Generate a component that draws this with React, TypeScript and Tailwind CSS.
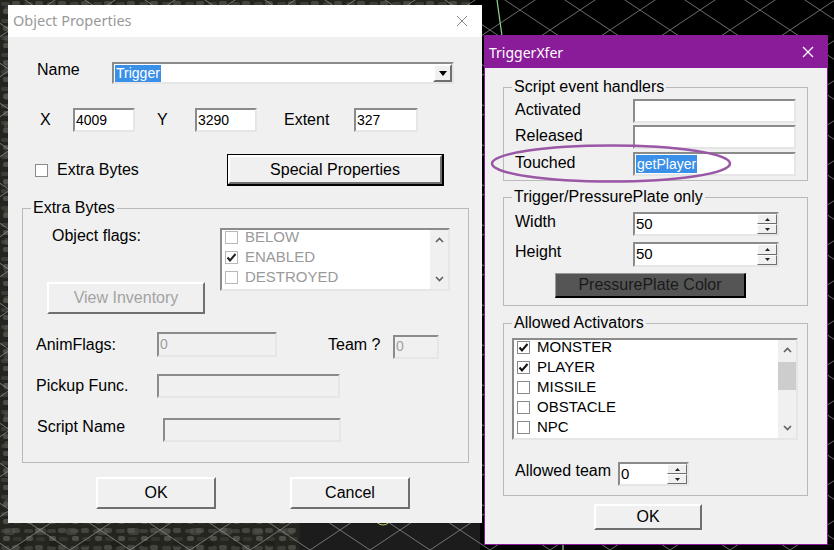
import React from "react";

const sunken = "border-2 border-t-[#8b8b8b] border-l-[#8b8b8b] border-r-[#e6e6e6] border-b-[#e6e6e6]";
const raised = "border-2 border-t-white border-l-white border-r-[#6f6f6f] border-b-[#6f6f6f]";

function Tick({ color = "#111" }: { color?: string }) {
  return (
    <svg width="11" height="11" viewBox="0 0 11 11">
      <path d="M1.5 5.5 L4 8.5 L9.5 2" fill="none" stroke={color} strokeWidth="2" />
    </svg>
  );
}

function Check({ checked, disabled }: { checked?: boolean; disabled?: boolean }) {
  return (
    <div
      className={`w-[13px] h-[13px] shrink-0 flex items-center justify-center bg-white border ${
        disabled ? "border-[#b8b8b8]" : "border-[#8a8a8a]"
      }`}
    >
      {checked && <Tick color={disabled ? "#222" : "#111"} />}
    </div>
  );
}

function Chevron({ up }: { up?: boolean }) {
  return (
    <svg width="9" height="6" viewBox="0 0 9 6">
      <polyline
        points={up ? "1,5 4.5,1.5 8,5" : "1,1 4.5,4.5 8,1"}
        fill="none"
        stroke="#606060"
        strokeWidth="1.6"
      />
    </svg>
  );
}

function Edit({
  w,
  h = "h-[24px]",
  value,
  selected,
  disabled,
}: {
  w: string;
  h?: string;
  value?: string;
  selected?: boolean;
  disabled?: boolean;
}) {
  return (
    <div
      className={`${w} ${h} ${sunken} flex items-center pl-[1px] text-[14px] ${
        disabled ? "bg-[#f0f0f0] text-[#a0a0a0]" : "bg-white text-black"
      }`}
    >
      {value &&
        (selected ? <span className="bg-[#3a8fe8] text-white leading-[18px] px-[1px]">{value}</span> : <span>{value}</span>)}
    </div>
  );
}

function Spin({ w, h = "h-[24px]", value }: { w: string; h?: string; value: string }) {
  return (
    <div className={`${w} ${h} ${sunken} bg-white flex text-[15px] text-black`}>
      <div className="flex-1 flex items-center pl-[1px]">{value}</div>
      <div className="w-[20px] flex flex-col">
        <div className={`flex-1 ${raised} bg-[#f0f0f0] border-[1px] flex items-center justify-center`}>
          <svg width="5" height="3" viewBox="0 0 5 3">
            <path d="M0 3 L2.5 0 L5 3 Z" fill="#222" />
          </svg>
        </div>
        <div className={`flex-1 ${raised} bg-[#f0f0f0] border-[1px] flex items-center justify-center`}>
          <svg width="5" height="3" viewBox="0 0 5 3">
            <path d="M0 0 L2.5 3 L5 0 Z" fill="#222" />
          </svg>
        </div>
      </div>
    </div>
  );
}

function Button({
  w,
  h,
  label,
  disabled,
  className = "",
}: {
  w: string;
  h: string;
  label: string;
  disabled?: boolean;
  className?: string;
}) {
  return (
    <div
      className={`${w} ${h} ${raised} bg-[#f0f0f0] flex items-center justify-center text-[16px] ${
        disabled ? "text-[#a3a3a3]" : "text-black"
      } ${className}`}
    >
      {label}
    </div>
  );
}

function Group({ title, className, children }: { title: string; className: string; children: React.ReactNode }) {
  return (
    <fieldset className={`border border-[#b9b9b9] ${className}`}>
      <legend className="ml-[8px] px-[2px] leading-[18px] text-[16px] text-black">{title}</legend>
      {children}
    </fieldset>
  );
}

function ListBox({
  w,
  h,
  items,
  disabled,
  thumb,
}: {
  w: string;
  h: string;
  items: { label: string; checked?: boolean }[];
  disabled?: boolean;
  thumb?: boolean;
}) {
  return (
    <div className={`${w} ${h} ${sunken} bg-white flex overflow-hidden`}>
      <div className="flex-1 -mt-[3px] pl-[3px] text-[15px]">
        {items.map((it) => (
          <div key={it.label} className="h-[20px] flex items-center gap-[7px]">
            <Check checked={it.checked} disabled={disabled} />
            <span className={disabled ? "text-[#9a9a9a]" : "text-black"}>{it.label}</span>
          </div>
        ))}
      </div>
      <div className="w-[18px] bg-[#f0f0f0] flex flex-col">
        <div className="h-[20px] flex items-center justify-center">
          <Chevron up />
        </div>
        {thumb ? <div className="mt-[2px] h-[28px] bg-[#cdcdcd]" /> : null}
        <div className="flex-1" />
        <div className="h-[20px] flex items-center justify-center">
          <Chevron />
        </div>
      </div>
    </div>
  );
}

function Backdrop() {
  return (
    <svg className="absolute inset-0" width="834" height="550" viewBox="0 0 834 550">
      <defs>
        <pattern id="grid" width="60" height="40" patternUnits="userSpaceOnUse" patternTransform="translate(40 10)">
          <path d="M0 0 L60 40 M60 0 L0 40" stroke="#8a8a8a" strokeWidth="1" fill="none" />
        </pattern>
        <pattern id="stone" width="23" height="17" patternUnits="userSpaceOnUse">
          <rect width="23" height="17" fill="#24251f" />
          <rect x="1" y="2" width="9" height="4" rx="2" fill="#3c3d36" />
          <rect x="12" y="1" width="8" height="5" rx="2" fill="#45463f" />
          <rect x="3" y="9" width="7" height="5" rx="2" fill="#4d4d46" />
          <rect x="13" y="10" width="9" height="4" rx="2" fill="#34352f" />
        </pattern>
        <pattern id="stone2" width="31" height="29" patternUnits="userSpaceOnUse">
          <rect x="4" y="6" width="11" height="7" rx="3" fill="#595951" opacity="0.5" />
          <rect x="18" y="19" width="9" height="6" rx="3" fill="#1a1a16" opacity="0.6" />
        </pattern>
      </defs>
      <rect width="834" height="550" fill="#000" />
      <rect x="0" y="0" width="470" height="550" fill="url(#stone)" />
      <rect x="0" y="0" width="470" height="550" fill="url(#stone2)" />
      <rect x="300" y="523" width="180" height="27" fill="#1c1c1c" />
      <rect width="834" height="550" fill="url(#grid)" opacity="0.8" />
      <path d="M497 0 L502 36" stroke="#8fd88f" strokeWidth="1.2" />
      <path d="M563 545 L563 550" stroke="#8fd88f" strokeWidth="1.2" />
      <circle cx="383" cy="517" r="8" fill="none" stroke="#c8c860" strokeWidth="1" />
    </svg>
  );
}

function ObjectProperties() {
  return (
    <div className="absolute left-[8px] top-[5px] w-[474px] h-[518px] flex flex-col">
      <div className="h-[32px] bg-white flex items-center justify-between pl-[5px] pr-[14px]">
        <span className="font-['Noto_Sans',sans-serif] text-[14.5px] text-[#999999]">Object Properties</span>
        <svg width="12" height="12" viewBox="0 0 12 12">
          <path d="M1 1 L11 11 M11 1 L1 11" stroke="#8c8c8c" strokeWidth="1" />
        </svg>
      </div>
      <div className="flex-1 bg-[#f0f0f0] text-[16px] text-black">
        <div className="mt-[25px] h-[22px] flex items-center pl-[29px]">
          <span className="w-[75px] -mt-[6px]">Name</span>
          <div className={`w-[342px] h-[22px] ${sunken} bg-white flex items-center pl-[1px] text-[14px]`}>
            <span className="bg-[#3a8fe8] text-white leading-[17px] px-[1px]">Trigger</span>
            <div className="flex-1" />
            <div className={`w-[19px] h-[18px] ${raised} bg-[#f0f0f0] flex items-center justify-center`}>
              <svg width="8" height="5" viewBox="0 0 8 5">
                <path d="M0 0 L8 0 L4 5 Z" fill="#000" />
              </svg>
            </div>
          </div>
        </div>

        <div className="mt-[24px] h-[24px] flex items-center pl-[32px]">
          <span className="w-[33px]">X</span>
          <Edit w="w-[62px]" value="4009" />
          <span className="ml-[22px] w-[38px]">Y</span>
          <Edit w="w-[62px]" value="3290" />
          <span className="ml-[27px] w-[70px]">Extent</span>
          <Edit w="w-[64px]" value="327" />
        </div>

        <div className="mt-[22px] h-[32px] flex items-center pl-[27px]">
          <Check />
          <span className="ml-[9px] w-[170px]">Extra Bytes</span>
          <div className="w-[217px] h-[32px] border border-black border-r-2 border-b-2">
            <Button w="w-full" h="h-full" label="Special Properties" />
          </div>
        </div>

        <Group title="Extra Bytes" className="mt-[13px] ml-[14px] w-[447px] h-[264px]">
          <div className="flex">
            <div className="w-[197px] flex flex-col">
              <span className="mt-[10px] pl-[29px] leading-[18px]">Object flags:</span>
              <Button w="w-[158px]" h="h-[32px]" label="View Inventory" disabled className="mt-[37px] ml-[24px]" />
            </div>
            <div className="mt-[11px]">
              <ListBox
                w="w-[230px]"
                h="h-[63px]"
                disabled
                items={[{ label: "BELOW" }, { label: "ENABLED", checked: true }, { label: "DESTROYED" }]}
              />
            </div>
          </div>
          <div className="mt-[18px] h-[25px] flex items-center pl-[13px]">
            <span className="w-[121px]">AnimFlags:</span>
            <Edit w="w-[120px]" h="h-[25px]" value="0" disabled />
            <span className="ml-[51px] w-[65px]">Team ?</span>
            <div className="mt-[4px]">
              <Edit w="w-[46px]" h="h-[24px]" value="0" disabled />
            </div>
          </div>
          <div className="mt-[17px] h-[24px] flex items-center pl-[13px]">
            <span className="w-[121px]">Pickup Func.</span>
            <Edit w="w-[183px]" disabled />
          </div>
          <div className="mt-[20px] h-[24px] flex items-center pl-[14px]">
            <span className="w-[126px] -mt-[7px]">Script Name</span>
            <Edit w="w-[178px]" disabled />
          </div>
        </Group>

        <div className="mt-[14px] flex pl-[88px]">
          <Button w="w-[120px]" h="h-[32px]" label="OK" />
          <Button w="w-[120px]" h="h-[32px]" label="Cancel" className="ml-[74px]" />
        </div>
      </div>
    </div>
  );
}

function TriggerXfer() {
  return (
    <div className="absolute left-[484px] top-[35px] w-[344px] h-[510px] border border-[#8a1c99] flex flex-col">
      <div className="h-[32px] bg-[#8a1c99] flex items-center justify-between pl-[4px] pr-[13px]">
        <span className="font-['Noto_Sans',sans-serif] text-[14px] text-white">TriggerXfer</span>
        <svg width="12" height="12" viewBox="0 0 12 12">
          <path d="M1 1 L11 11 M11 1 L1 11" stroke="#fff" strokeWidth="1.3" />
        </svg>
      </div>
      <div className="flex-1 bg-[#f0f0f0] text-[16px] text-black flex flex-col">
        <Group title="Script event handlers" className="mt-[10px] ml-[18px] w-[305px] h-[103px]">
          <div className="mt-[3px] h-[24px] flex items-center pl-[11px]">
            <span className="w-[118px] -mt-[3px]">Activated</span>
            <Edit w="w-[163px]" />
          </div>
          <div className="mt-[2px] h-[24px] flex items-center pl-[11px]">
            <span className="w-[118px] -mt-[3px]">Released</span>
            <Edit w="w-[163px]" />
          </div>
          <div className="mt-[3px] h-[24px] flex items-center pl-[11px]">
            <span className="w-[118px] -mt-[3px]">Touched</span>
            <Edit w="w-[163px]" value="getPlayer" selected />
          </div>
        </Group>

        <Group title="Trigger/PressurePlate only" className="mt-[7px] ml-[18px] w-[305px] h-[118px]">
          <div className="mt-[6px] h-[24px] flex items-center pl-[11px]">
            <span className="w-[118px] -mt-[4px]">Width</span>
            <Spin w="w-[146px]" value="50" />
          </div>
          <div className="mt-[6px] h-[25px] flex items-center pl-[11px]">
            <span className="w-[118px] -mt-[6px]">Height</span>
            <Spin w="w-[146px]" h="h-[25px]" value="50" />
          </div>
          <div className="mt-[6px] ml-[51px] w-[191px] h-[25px] bg-[#555555] border border-t-[#9a9a9a] border-l-[#9a9a9a] border-r-2 border-b-2 border-r-black border-b-black flex items-center justify-center text-[#1a1a1a]">
            PressurePlate Color
          </div>
        </Group>

        <Group title="Allowed Activators" className="mt-[8px] ml-[18px] w-[305px] h-[182px]">
          <div className="mt-[6px] ml-[8px]">
            <ListBox
              w="w-[286px]"
              h="h-[102px]"
              thumb
              items={[
                { label: "MONSTER", checked: true },
                { label: "PLAYER", checked: true },
                { label: "MISSILE" },
                { label: "OBSTACLE" },
                { label: "NPC" },
              ]}
            />
          </div>
          <div className="mt-[22px] h-[24px] flex items-center pl-[11px]">
            <span className="w-[103px] -mt-[6px]">Allowed team</span>
            <Spin w="w-[71px]" value="0" />
          </div>
        </Group>

        <Button w="w-[108px]" h="h-[26px]" label="OK" className="mt-[8px] ml-[109px]" />
      </div>

      <svg className="absolute left-[5px] top-[107px]" width="242" height="41" viewBox="0 0 242 41">
        <ellipse cx="121" cy="20.5" rx="119" ry="18" fill="none" stroke="#9a57a5" strokeWidth="2.5" />
      </svg>
    </div>
  );
}

export default function App() {
  return (
    <div className="relative w-[834px] h-[550px] overflow-hidden bg-black font-['Liberation_Sans',Arial,sans-serif]">
      <Backdrop />
      <ObjectProperties />
      <TriggerXfer />
    </div>
  );
}
